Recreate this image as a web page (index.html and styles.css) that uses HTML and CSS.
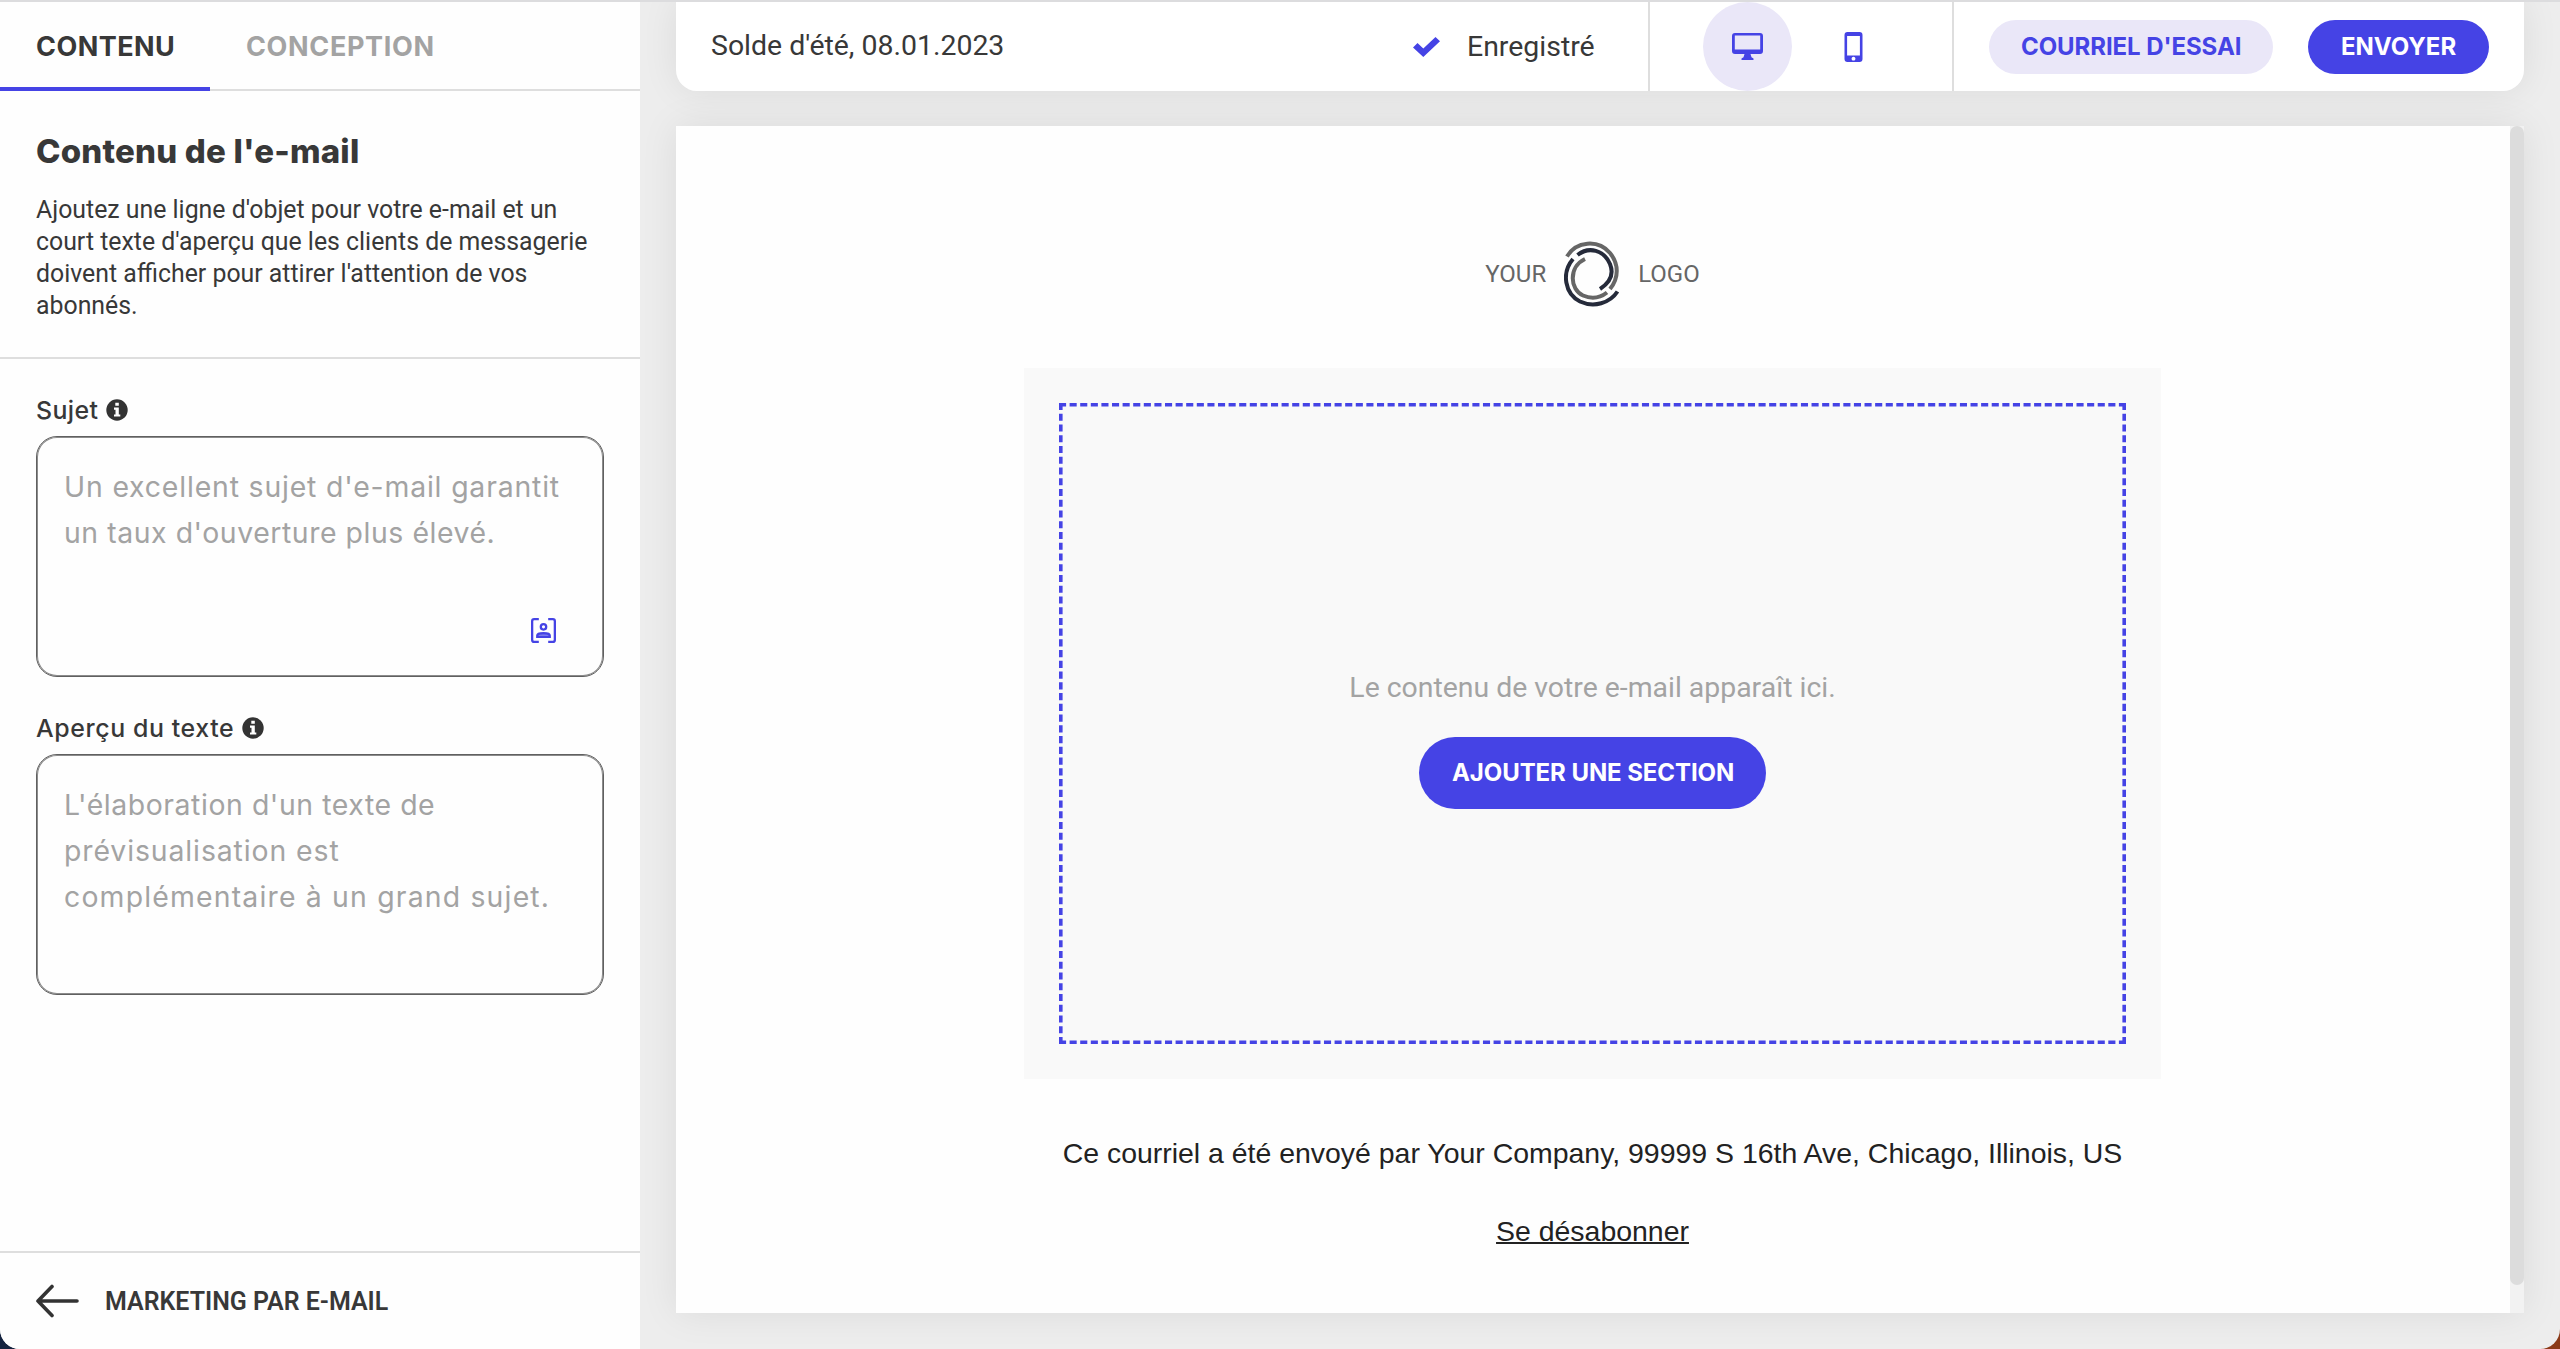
FILE: index.html
```html
<!DOCTYPE html>
<html lang="fr">
<head>
<meta charset="utf-8">
<title>Marketing par e-mail</title>
<link rel="stylesheet" href="styles.css">
</head>
<body>
<div class="app">
  <aside class="sidebar">
    <nav class="tabs">
      <a class="tab tab-active"><span class="t-contenu">CONTENU</span></a>
      <a class="tab"><span class="t-conception">CONCEPTION</span></a>
    </nav>
    <section class="intro">
      <h1><span class="t-title">Contenu de l'e-mail</span></h1>
      <p>Ajoutez une ligne d'objet pour votre e-mail et un<br>court texte d'aperçu que les clients de messagerie<br>doivent afficher pour attirer l'attention de vos<br>abonnés.</p>
    </section>
    <section class="fields">
      <div class="label"><span class="t-sujet">Sujet</span>
        <svg class="info" viewBox="0 0 22 22"><circle cx="11" cy="11" r="10.7" fill="#333"/><path d="M9.3 3.800h3.500v3H9.300zM8 8.600h4.800v6.800h1.500v2.200H8v-2.200h1.500v-4.600H8z" fill="#fff"/></svg>
      </div>
      <div class="box">
        <span class="t-s1">Un excellent sujet d'e-mail garantit</span><br><span class="t-s2">un taux d'ouverture plus élevé.</span>
        <svg class="person" viewBox="0 0 24 24" fill="none" stroke="#4543e5" stroke-width="2.200"><path d="M7.500 1.100H3Q1.100 1.100 1.100 3v18q0 1.900 1.900 1.900h4.500M16.500 1.100H21q1.900 0 1.900 1.900v18q0 1.900-1.900 1.900h-4.500"/><circle cx="12" cy="8.500" r="2.600"/><path d="M6 18.200v-1.300c0-3 12-3 12 0v1.300z" fill="#8d8cf0"/></svg>
      </div>
      <div class="label"><span class="t-apercu">Aperçu du texte</span>
        <svg class="info" viewBox="0 0 22 22"><circle cx="11" cy="11" r="10.7" fill="#333"/><path d="M9.3 3.800h3.500v3H9.300zM8 8.600h4.800v6.800h1.500v2.200H8v-2.200h1.500v-4.600H8z" fill="#fff"/></svg>
      </div>
      <div class="box">
        <span class="t-a1">L'élaboration d'un texte de</span><br><span class="t-a2">prévisualisation est</span><br><span class="t-a3">complémentaire à un grand sujet.</span>
      </div>
    </section>
    <footer class="back">
      <svg class="arrow" viewBox="0 0 44 34" fill="none" stroke="#333" stroke-width="3.600" stroke-linecap="round" stroke-linejoin="round"><path d="M41.500 17H2.500M16.500 2.500L2.500 17l14 14.500"/></svg>
      <span class="t-back">MARKETING PAR E-MAIL</span>
    </footer>
  </aside>
  <main class="main">
    <header class="toolbar">
      <div class="name"><span class="t-name">Solde d'été, 08.01.2023</span></div>
      <div class="saved">
        <svg class="check" viewBox="0 0 27 20"><path d="M0 10.500L4.500 6l5.800 5.400L22.500 0 27 4.200 10.300 20z" fill="#4543e5"/></svg>
        <span class="t-saved">Enregistré</span>
      </div>
      <div class="devices">
        <div class="device device-on">
          <svg class="desktop" viewBox="0 0 31 27"><path fill-rule="evenodd" d="M3 0h25q3 0 3 3v15q0 3-3 3h-9.500l1 3.300 2 1.200V27h-12v-1.500l2-1.200 1-3.300H3q-3 0-3-3V3q0-3 3-3zM2.800 2.600v13.900h25.400V2.600z" fill="#4543e5"/></svg>
        </div>
        <div class="device">
          <svg class="phone" viewBox="0 0 18 30"><path fill-rule="evenodd" d="M3 0h12q3 0 3 3v24q0 3-3 3H3q-3 0-3-3V3q0-3 3-3zM2.600 4v19.500h12.800V4zM9 24.800a1.900 1.900 0 1 0 .01 0z" fill="#4543e5"/></svg>
        </div>
      </div>
      <div class="actions">
        <button class="btn btn-light"><span class="t-test">COURRIEL D'ESSAI</span></button>
        <button class="btn btn-send"><span class="t-send">ENVOYER</span></button>
      </div>
    </header>
    <div class="canvas">
      <div class="mail">
        <div class="logo">
          <span class="t-your">YOUR</span>
          <svg class="mark" viewBox="0 0 56 66" fill="none" stroke-width="4"><g stroke="#666"><path d="M3 15.500C12 0 34-2 46 12c9 11 9 25 0 36"/><path d="M21 18C4 26 6 49 19 54.500c9 4 17 2.500 24-3"/></g><g stroke="#252a3a"><path d="M13.500 14C25 5 40 9 46 23c4 10 1 18-10 25"/><path d="M9 18C-3 32 1 53 16 60.500c14 6.500 30 1.500 37.500-10"/></g></svg>
          <span class="t-logo">LOGO</span>
        </div>
        <div class="block">
          <div class="drop">
            <svg class="dashes" viewBox="0 0 1067 641" fill="none" stroke="#4543e5" stroke-width="3.600"><path d="M0 1.800H1067M0 639.200H1067" stroke-dasharray="7.100 3.499"/><path d="M1.800 0V641M1065.200 0V641" stroke-dasharray="7.100 3.644"/></svg>
            <p class="hint"><span class="t-hint">Le contenu de votre e-mail apparaît ici.</span></p>
            <button class="btn btn-add"><span class="t-add">AJOUTER UNE SECTION</span></button>
          </div>
        </div>
        <p class="sender"><span class="t-sender">Ce courriel a été envoyé par Your Company, 99999 S 16th Ave, Chicago, Illinois, US</span></p>
        <p class="unsub"><a class="t-unsub">Se désabonner</a></p>
      </div>
      <div class="track"><div class="thumb"></div></div>
    </div>
  </main>
</div>
</body>
</html>
```
FILE: styles.css
```css
* { box-sizing: border-box; margin: 0; padding: 0; }
html { background: linear-gradient(90deg, #14233f 50%, #8b3a18 50%); }
body { font-family: Roboto, sans-serif; color: #383838; white-space: nowrap; }
svg { display: block; flex: none; }
.app { display: flex; width: 2560px; height: 1349px; background: #ededed; border-top: 2px solid #dcdcde; border-radius: 0 0 20px 20px; overflow: hidden; }

.sidebar { width: 640px; background: #fefefe; display: flex; flex-direction: column; }
.tabs { display: flex; height: 89px; box-shadow: inset 0 -2px #dedede; font: 700 27px/89px Inter, sans-serif; }
.tab { padding: 0 36px; color: #a3a3a3; }
.tab-active { width: 210px; color: #383838; border-bottom: 4px solid #4543e5; }
.t-contenu { letter-spacing: .45px; }
.t-conception { letter-spacing: .65px; }
.intro { height: 268px; padding: 38px 36px 0; border-bottom: 2px solid #dedede; }
.intro h1 { font: 800 33px/44px Inter, sans-serif; letter-spacing: .2px; }
.intro p { margin-top: 21px; font-size: 24.85px; line-height: 32px; }
.fields { flex: 1; padding: 33px 36px 0; }
.label { display: flex; align-items: center; gap: 8px; height: 36px; margin-bottom: 8px; font: 500 24.9px/36px Inter, sans-serif; }
.t-sujet { letter-spacing: .4px; }
.t-apercu { letter-spacing: .6px; }
.info { width: 22px; height: 22px; }
.box { position: relative; height: 241px; margin-bottom: 33px; padding: 27px; border: 1px solid #606060; box-shadow: inset 0 0 0 1px #8c8c8c; border-radius: 21px; color: #a3a3a3; font: 400 28.4px/46px Inter, sans-serif; }
.t-s1 { letter-spacing: .83px; }
.t-s2 { letter-spacing: .56px; }
.t-a1 { letter-spacing: .57px; }
.t-a2 { letter-spacing: .9px; }
.t-a3 { letter-spacing: 1.18px; }
.person { position: absolute; right: 47px; bottom: 33px; width: 25px; height: 25px; }
.back { display: flex; align-items: center; gap: 25px; height: 98px; padding: 0 35px; border-top: 2px solid #dedede; font-size: 24.95px; font-weight: 600; }
.arrow { width: 45px; height: 34px; }

.main { width: 1848px; margin-left: 36px; display: flex; flex-direction: column; gap: 35px; }
.toolbar { display: flex; height: 89px; background: #fff; border-radius: 0 0 21px 21px; box-shadow: 0 0 36px rgba(0,0,0,.08); font-size: 28.44px; line-height: 88px; }
.name { flex: 1; padding-left: 35px; }
.saved { display: flex; align-items: center; gap: 27px; width: 235px; }
.check { width: 27px; height: 20px; }
.devices { display: flex; align-items: center; gap: 17px; width: 306px; padding-left: 53px; border: solid #dedede; border-width: 0 2px; }
.device { display: flex; align-items: center; justify-content: center; width: 89px; height: 89px; border-radius: 50%; }
.device-on { background: #eae7f8; }
.desktop { width: 31px; height: 27px; }
.phone { width: 19px; height: 30px; }
.actions { display: flex; align-items: center; gap: 35px; width: 570px; padding-left: 35px; }
.btn { height: 54px; border: 0; border-radius: 36px; background: #4543e5; color: #fff; font: 700 24px/52px Inter, sans-serif; text-align: left; white-space: nowrap; padding: 0 32px; }
.btn-light { width: 284px; background: #eae7f8; color: #4543e5; letter-spacing: -.08px; }
.btn-send { width: 181px; padding-left: 33px; }

.canvas { display: flex; height: 1187px; background: #fefefe; box-shadow: 0 0 36px rgba(0,0,0,.08); }
.mail { width: 1834px; display: flex; flex-direction: column; align-items: center; padding: 116px 1px 0 0; }
.logo { display: flex; align-items: center; gap: 18px; height: 64px; color: #666; font-size: 24px; }
.mark { width: 56px; height: 66px; }
.block { width: 1137px; height: 711px; margin-top: 62px; padding: 35px; background: #f9f9f9; }
.drop { position: relative; height: 641px; display: flex; flex-direction: column; align-items: center; padding-top: 265px; }
.dashes { position: absolute; top: 0; left: 0; width: 1067px; height: 641px; }
.hint { font-size: 28.4px; line-height: 40px; color: #a3a3a3; }
.btn-add { width: 347px; height: 72px; margin-top: 29px; padding: 0 33px; line-height: 70px; letter-spacing: -.08px; }
.sender { margin-top: 54px; font: 28.44px/40px "Liberation Sans", sans-serif; color: #222; }
.unsub { margin-top: 38px; font: 28.44px/40px "Liberation Sans", sans-serif; color: #222; }
.unsub a { text-decoration: underline; text-decoration-thickness: 2px; }
.track { width: 14px; background: #f2f2f2; }
.thumb { height: 1159px; border-radius: 7px; background: #dcdcdc; }
```
